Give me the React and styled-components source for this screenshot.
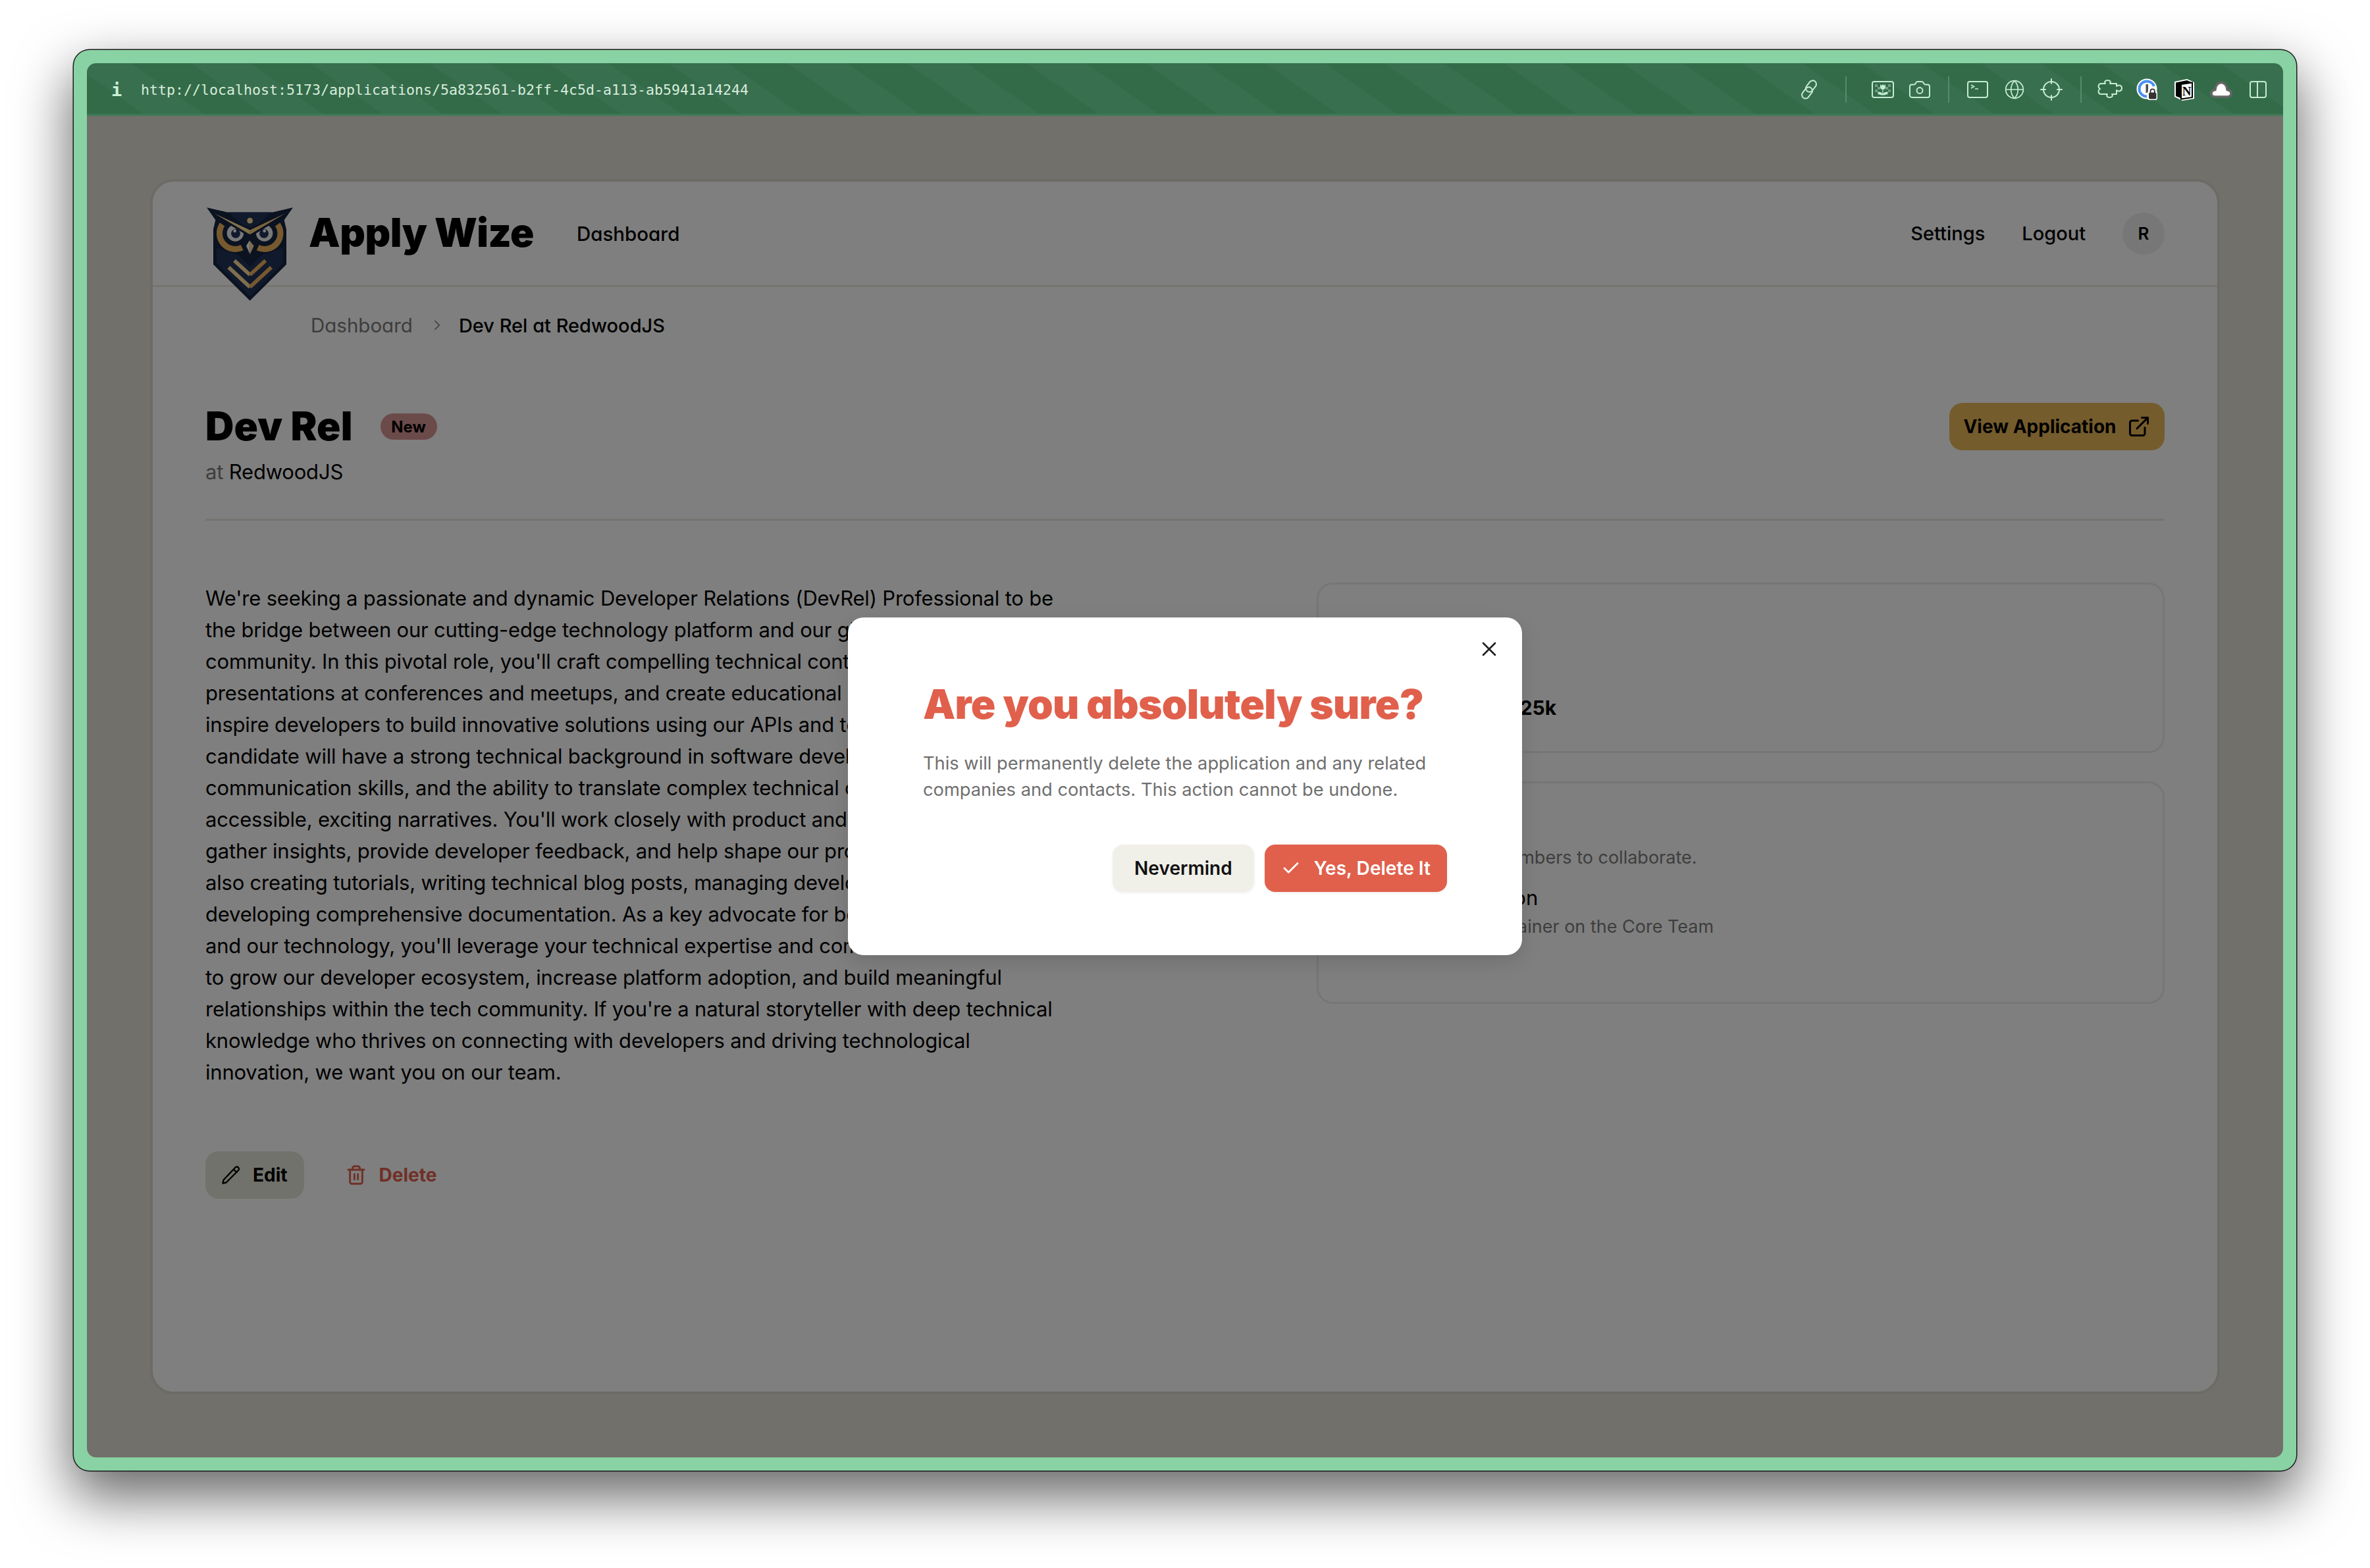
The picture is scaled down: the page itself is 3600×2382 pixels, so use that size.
import React from "react";
import styled, { createGlobalStyle } from "styled-components";
import { Camera, Check, ExternalLink, Globe, Trash2, X, ChevronRight } from "lucide-react";

const Global = createGlobalStyle`
  html, body { margin: 0; padding: 0; background: #fff; }
  body { font-family: Inter, "Liberation Sans", sans-serif; color: #000; }
  * { box-sizing: border-box; }
`;

const Stage = styled.div`
  width: 3600px;
  height: 2382px;
  padding: 76px 112px 148px;
  overflow: hidden;
`;
const Frame = styled.div`
  height: 100%;
  padding: 20px;
  background: #89d2a3;
  border-radius: 24px;
  box-shadow: 0 0 0 1.5px #1c1c1c, 0 36px 84px 4px rgba(0, 0, 0, 0.6);
`;
const Viewport = styled.div`
  height: 100%;
  display: flex;
  flex-direction: column;
  border-radius: 14px;
  overflow: hidden;
`;
const Toolbar = styled.div`
  height: 80px;
  flex: none;
  display: flex;
  align-items: center;
  padding: 0 10px 0 37px;
  box-shadow: inset 0 -3px 0 #3e7a55;
  background: repeating-linear-gradient(35deg, #336b48 0 52px, #386f4e 52px 104px);
`;
const InfoGlyph = styled.span`
  font: 700 27px "DejaVu Sans Mono", monospace;
  color: #c9f0d6;
  width: 45px;
`;
const Url = styled.span`
  font: 400 21.6px "DejaVu Sans Mono", monospace;
  color: #d7ebdd;
  flex: 1;
`;
const ToolIcon = styled.span`
  width: 56px;
  height: 56px;
  flex: none;
  display: flex;
  align-items: center;
  justify-content: center;
  color: #c5ecd3;
`;
const ToolSep = styled.span`
  width: 2px;
  height: 40px;
  flex: none;
  margin: 0 ${(p) => p.$gap}px;
  background: #548b6a;
`;
const Page = styled.div`
  position: relative;
  flex: 1;
  padding: 96px;
  background: #e2e0d4;
`;
const Card = styled.div`
  height: 100%;
  background: #fff;
  border: 4px solid #d8d6ca;
  border-radius: 36px;
  display: flex;
  flex-direction: column;
`;
const Header = styled.header`
  height: 160px;
  flex: none;
  display: flex;
  align-items: center;
  padding: 0 80px;
  border-bottom: 3px solid #ebe9e0;
`;
const Logo = styled.svg`
  width: 131px;
  height: 142px;
  margin: 62px 0 0 2px;
  flex: none;
`;
const Brand = styled.span`
  font-size: 60px;
  font-weight: 900;
  letter-spacing: -0.5px;
  margin: 0 0 3px 24px;
  font-feature-settings: "cv11";
`;
const NavLink = styled.span`
  font-size: ${(p) => p.$size || 29}px;
  font-weight: 500;
  font-feature-settings: "cv11";
  margin-left: ${(p) => p.$gap}px;
`;
const Spacer = styled.span`
  flex: 1;
`;
const Avatar = styled.span`
  width: 64px;
  height: 64px;
  margin-left: 56px;
  border-radius: 50%;
  background: #eeeeee;
  display: flex;
  align-items: center;
  justify-content: center;
  font-size: 26px;
  font-weight: 600;
`;
const Crumbs = styled.nav`
  display: flex;
  align-items: center;
  height: 40px;
  margin: 38px 0 0 240px;
  font-size: 29.5px;
  font-weight: 400;
  font-feature-settings: "cv11";
  color: #7a7a7a;
`;
const CrumbIcon = styled.span`
  display: flex;
  margin: 0 20px 0 24px;
`;
const CrumbCurrent = styled.span`
  color: #000;
  font-size: 29px;
  font-weight: 500;
`;
const Main = styled.main`
  padding: 0 80px;
  flex: 1;
`;
const TitleRow = styled.div`
  display: flex;
  align-items: center;
  margin-top: 98px;
  height: 72px;
`;
const Title = styled.h1`
  margin: 0 0 2px;
  font-size: 60px;
  font-weight: 900;
  letter-spacing: 0.2px;
`;
const Badge = styled.span`
  margin: 0 0 0 42px;
  width: 86px;
  height: 40px;
  border-radius: 20px;
  background: #d69694;
  display: flex;
  align-items: center;
  justify-content: center;
  font-size: 24px;
  font-weight: 700;
`;
const ViewButton = styled.span`
  margin-left: auto;
  width: 327px;
  height: 72px;
  border-radius: 20px;
  background: #eab858;
  display: flex;
  align-items: center;
  justify-content: center;
  gap: 16px;
  font-size: 28px;
  font-weight: 700;
`;
const Company = styled.p`
  margin: 13px 0 0;
  font-size: 31px;
  letter-spacing: -0.19px;
  line-height: 40px;
  color: #000;
`;
const CompanyAt = styled.span`
  color: #7c7c7c;
`;
const Rule = styled.hr`
  margin: 51px 0 0;
  border: 0;
  border-top: 3px solid #ebe9e0;
`;
const Columns = styled.div`
  display: grid;
  grid-template-columns: 1fr 1288px;
  padding-top: 94px;
`;
const Copy = styled.p`
  margin: 0;
  font-size: 31px;
  letter-spacing: -0.2px;
  line-height: 48px;
  white-space: pre-line;
`;
const Actions = styled.div`
  display: flex;
  align-items: center;
  gap: 42px;
  margin-top: 96px;
`;
const ActionButton = styled.span`
  height: 72px;
  padding: 0 ${(p) => (p.$danger ? "0" : "25px")};
  border-radius: 20px;
  display: flex;
  align-items: center;
  gap: 19px;
  font-size: 28px;
  font-weight: 700;
  background: ${(p) => (p.$danger ? "transparent" : "#e4e4d8")};
  color: ${(p) => (p.$danger ? "#e0604c" : "#000")};
  margin-left: ${(p) => (p.$danger ? "21px" : "0")};
`;
const Side = styled.aside`
  display: flex;
  flex-direction: column;
  gap: 43px;
`;
const Panel = styled.section`
  height: ${(p) => p.$h}px;
  border: 3px solid #ededed;
  border-radius: 24px;
  padding: 60px 0 0 ${(p) => p.$left}px;
`;
const PanelValue = styled.strong`
  font-size: 30px;
  font-weight: 700;
  display: block;
  margin-top: 75px;
`;
const PanelLabel = styled.span`
  font-size: 28px;
  color: #7c7c7c;
  display: block;
`;
const PanelHint = styled.p`
  margin: -1px 0 0 6px;
  font-size: 27px;
  line-height: 40px;
  color: #7c7c7c;
`;
const PersonName = styled.p`
  margin: 21px 0 0 167px;
  font-size: 31px;
  line-height: 40px;
`;
const PersonRole = styled.p`
  margin: 4px 0 0 167px;
  font-size: 27px;
  line-height: 40px;
  color: #7c7c7c;
`;
const Overlay = styled.div`
  position: absolute;
  inset: 0;
  background: rgba(0, 0, 0, 0.5);
  display: flex;
  align-items: center;
  justify-content: center;
`;
const Modal = styled.div`
  position: relative;
  width: 1024px;
  margin-bottom: 2px;
  padding: 96px 114px;
  background: #fff;
  border-radius: 24px;
  box-shadow: 0 10px 30px rgba(0, 0, 0, 0.12);
`;
const Close = styled.span`
  position: absolute;
  top: 30px;
  right: 32px;
  display: flex;
  color: #222;
`;
const ModalTitle = styled.h2`
  margin: 0;
  font-size: 62px;
  line-height: 72px;
  font-weight: 900;
  letter-spacing: -0.7px;
  color: #e0604c;
  font-feature-settings: "cv11";
`;
const ModalText = styled.p`
  margin: 34px 0 0;
  font-size: 27.25px;
  line-height: 40px;
  color: #6f6f6f;
  white-space: pre-line;
`;
const ModalActions = styled.div`
  display: flex;
  justify-content: flex-end;
  gap: 16px;
  margin-top: 63px;
`;
const ModalButton = styled.span`
  height: 72px;
  padding: 0 ${(p) => (p.$danger ? "25px" : "33px")};
  border-radius: 16px;
  display: flex;
  align-items: center;
  gap: 20px;
  font-size: 28px;
  letter-spacing: 0.05px;
  font-weight: 600;
  background: ${(p) => (p.$danger ? "#e0604c" : "#f0efe8")};
  color: ${(p) => (p.$danger ? "#fff" : "#111")};
  box-shadow: 0 2px 4px rgba(0, 0, 0, 0.06);
`;

const Owl = () => (
  <Logo viewBox="75 105 393 425">
    <polygon points="75,105 170,127 375,127 468,105 428,162 438,205 438,365 272,530 105,365 105,205 115,162" fill="#162440" />
    <polygon points="120,290 120,358 272,510 424,358 424,290 330,320 272,375 215,320" fill="#22345a" />
    <circle cx="205" cy="222" r="92" fill="#162440" />
    <circle cx="340" cy="222" r="92" fill="#162440" />
    <path d="M146 182A72 72 0 0 0 236 288" fill="none" stroke="#ecb25c" strokeWidth="27" />
    <path d="M398 182A72 72 0 0 1 308 288" fill="none" stroke="#ecb25c" strokeWidth="27" />
    <circle cx="205" cy="222" r="38" fill="#f2f2f2" />
    <circle cx="338" cy="222" r="38" fill="#f2f2f2" />
    <circle cx="207" cy="224" r="21" fill="#22345a" />
    <circle cx="336" cy="224" r="21" fill="#22345a" />
    <circle cx="203" cy="212" r="7" fill="#fff" />
    <circle cx="338" cy="212" r="7" fill="#fff" />
    <polygon points="175,127 370,127 272,215" fill="#22345a" />
    <polygon points="100,135 272,240 444,135 272,195" fill="#162440" />
    <polygon points="110,132 272,208 272,228" fill="#ffdf9a" />
    <polygon points="432,132 272,208 272,228" fill="#f5c878" />
    <polygon points="190,145 350,145 272,192" fill="#22345a" />
    <circle cx="272" cy="165" r="13" fill="#ffdf9a" />
    <polygon points="236,262 272,228 308,262 272,378" fill="#162440" />
    <polygon points="270,255 272,318 255,280" fill="#ffffff" />
    <polygon points="270,255 290,280 272,318" fill="#ffdf9a" />
    <polyline points="201,347 272,412" fill="none" stroke="#ffdf9a" strokeWidth="17" />
    <polyline points="272,412 343,347" fill="none" stroke="#ecb25c" strokeWidth="17" />
    <polyline points="175,378 272,468" fill="none" stroke="#ffdf9a" strokeWidth="17" />
    <polyline points="272,468 369,378" fill="none" stroke="#ecb25c" strokeWidth="17" />
  </Logo>
);

const stroke = { fill: "none", stroke: "currentColor", strokeWidth: 2, strokeLinecap: "round", strokeLinejoin: "round" };

const LinkIcon = () => (
  <svg width="32" height="32" viewBox="0 0 32 32" {...stroke}>
    <rect x="13.5" y="1.5" width="11" height="19" rx="5.5" transform="rotate(38 19 11)" />
    <rect x="7.5" y="11.5" width="11" height="19" rx="5.5" transform="rotate(38 13 21)" />
  </svg>
);
const FlowerIcon = () => (
  <svg width="34" height="26" viewBox="0 0 34 26">
    <rect x="1" y="1" width="32" height="24" rx="3" {...stroke} />
    <path d="M5 5h4v4H5zM9 9h4v4H9zM5 13h4v4H5zM9 17h4v4H9zM25 5h4v4h-4zM21 9h4v4h-4zM25 13h4v4h-4zM21 17h4v4h-4z" fill="currentColor" opacity=".4" />
    <path d="M13 5l2 2 2-2 2 2 2-2v4a4 4 0 0 1-8 0z" fill="currentColor" />
    <path d="M17 12v9M17 21c-2-4-5-4-7-4 1 3 4 4 7 4zM17 21c2-4 5-4 7-4-1 3-4 4-7 4z" fill="currentColor" stroke="currentColor" strokeWidth="1.2" />
  </svg>
);
const TerminalIcon = () => (
  <svg width="32" height="26" viewBox="0 0 32 26">
    <rect x="1" y="1" width="30" height="24" rx="3" {...stroke} />
    <path d="M6 6l4.500 2.500L6 11M12 12h5" fill="none" stroke="currentColor" strokeWidth="1.500" />
  </svg>
);
const CrossIcon = () => (
  <svg width="34" height="34" viewBox="0 0 34 34" {...stroke}>
    <circle cx="17" cy="17" r="12" />
    <path d="M17 1v7M17 26v7M1 17h7M26 17h7" />
  </svg>
);
const PuzzleIcon = () => (
  <svg width="40" height="30" viewBox="0 0 40 30" {...stroke}>
    <path d="M6 6h6c-2-3 0-5 3.500-5s5.500 2 3.500 5h10v4c3-2.500 8-2 8 3s-5 5.500-8 3v6h-7c2 3 0 5-3.500 5s-5.500-2-3.500-5H6c-3 0-4.500-2-4.500-4.500 0-1.500 1-2.500 2.500-3.500-1.500-1-2.500-2-2.500-3.500C1.500 8 3 6 6 6z" />
  </svg>
);
const OnePassIcon = () => (
  <svg width="34" height="34" viewBox="0 0 34 34">
    <circle cx="16" cy="16" r="15.500" fill="#fff" />
    <path d="M16 4.500A11.500 11.500 0 1 0 16 27.500" fill="none" stroke="#4a90f0" strokeWidth="4" />
    <path d="M16 4.500A11.500 11.500 0 0 1 27 12" fill="none" stroke="#4a90f0" strokeWidth="4" />
    <rect x="14.500" y="9" width="3.500" height="13" fill="#4d4d4d" />
    <rect x="17" y="19" width="15" height="14" rx="3" fill="#fff" />
    <rect x="19" y="21.500" width="11.500" height="10" rx="2" fill="#333" />
    <path d="M21.500 22v-2.500a3.200 3.200 0 0 1 6.400 0V22" fill="none" stroke="#333" strokeWidth="1.800" />
  </svg>
);
const NotionIcon = () => (
  <svg width="32" height="34" viewBox="0 0 32 34">
    <path d="M1 5L20 1l11 5v25l-18 3-12-6z" fill="#fff" />
    <path d="M3 6.500L20 3l8 3.500-15 2.500v22L3 27z" fill="#000" />
    <path d="M11 9l17-2.500V29l-17 2.500z" fill="#fff" stroke="#000" strokeWidth="2" />
    <text x="19.500" y="25.500" textAnchor="middle" fontFamily="Liberation Serif, serif" fontWeight="700" fontSize="19" fill="#000">N</text>
  </svg>
);
const CloudIcon = () => (
  <svg width="34" height="28" viewBox="0 0 34 28">
    <path d="M8 25c-4 0-6-2-6-5 0-3 2-5 6-5.500 0-6 4-11 9-11s9 5 9 11c4 .5 6 2.500 6 5.500s-2 5-6 5z" fill="#fff" stroke="#666" strokeWidth="3.500" strokeLinejoin="round" />
  </svg>
);
const SplitIcon = () => (
  <svg width="26" height="26" viewBox="0 0 26 26" {...stroke}>
    <rect x="1" y="1" width="24" height="24" rx="3" />
    <path d="M12 1v24" />
  </svg>
);
const PencilIcon = () => (
  <svg width="28" height="28" viewBox="0 0 28 28" fill="none" stroke="currentColor" strokeWidth="2.400" strokeLinejoin="round" strokeLinecap="round">
    <path d="M1.500 26.500l1-5L20.500 2.500c1-1 3-1.500 4.500 0s1 3.500 0 4.500L6.500 25.500z" />
    <path d="M18 5.500l4.500 4.500" />
  </svg>
);

const copy = `We're seeking a passionate and dynamic Developer Relations (DevRel) Professional to be
the bridge between our cutting-edge technology platform and our global developer
community. In this pivotal role, you'll craft compelling technical content, deliver
presentations at conferences and meetups, and create educational resources that
inspire developers to build innovative solutions using our APIs and tools. The ideal
candidate will have a strong technical background in software development, excellent
communication skills, and the ability to translate complex technical concepts into
accessible, exciting narratives. You'll work closely with product and engineering to
gather insights, provide developer feedback, and help shape our product roadmap, while
also creating tutorials, writing technical blog posts, managing developer forums, and
developing comprehensive documentation. As a key advocate for both our community
and our technology, you'll leverage your technical expertise and communication skills
to grow our developer ecosystem, increase platform adoption, and build meaningful
relationships within the tech community. If you're a natural storyteller with deep technical
knowledge who thrives on connecting with developers and driving technological
innovation, we want you on our team.`;

export default function App() {
  return (
    <>
      <Global />
      <Stage>
        <Frame>
          <Viewport>
            <Toolbar>
              <InfoGlyph>i</InfoGlyph>
              <Url>http://localhost:5173/applications/5a832561-b2ff-4c5d-a113-ab5941a14244</Url>
              <ToolIcon><LinkIcon /></ToolIcon>
              <ToolSep $gap={27} />
              <ToolIcon><FlowerIcon /></ToolIcon>
              <ToolIcon><Camera size={36} strokeWidth={1.300} /></ToolIcon>
              <ToolSep $gap={15} />
              <ToolIcon><TerminalIcon /></ToolIcon>
              <ToolIcon><Globe size={32} strokeWidth={1.300} /></ToolIcon>
              <ToolIcon><CrossIcon /></ToolIcon>
              <ToolSep $gap={16} />
              <ToolIcon><PuzzleIcon /></ToolIcon>
              <ToolIcon><OnePassIcon /></ToolIcon>
              <ToolIcon><NotionIcon /></ToolIcon>
              <ToolIcon><CloudIcon /></ToolIcon>
              <ToolIcon><SplitIcon /></ToolIcon>
            </Toolbar>
            <Page>
              <Card>
                <Header>
                  <Owl />
                  <Brand>Apply Wize</Brand>
                  <NavLink $gap={65} $size={29.5}>Dashboard</NavLink>
                  <Spacer />
                  <NavLink $gap={0}>Settings</NavLink>
                  <NavLink $gap={56}>Logout</NavLink>
                  <Avatar>R</Avatar>
                </Header>
                <Crumbs>
                  <span>Dashboard</span>
                  <CrumbIcon><ChevronRight size={26} strokeWidth={1.500} /></CrumbIcon>
                  <CrumbCurrent>Dev Rel at RedwoodJS</CrumbCurrent>
                </Crumbs>
                <Main>
                  <TitleRow>
                    <Title>Dev Rel</Title>
                    <Badge>New</Badge>
                    <ViewButton>View Application <ExternalLink size={36} strokeWidth={2} /></ViewButton>
                  </TitleRow>
                  <Company><CompanyAt>at</CompanyAt> RedwoodJS</Company>
                  <Rule />
                  <Columns>
                    <div>
                      <Copy>{copy}</Copy>
                      <Actions>
                        <ActionButton><PencilIcon /> Edit</ActionButton>
                        <ActionButton $danger><Trash2 size={32} strokeWidth={2.200} /> Delete</ActionButton>
                      </Actions>
                    </div>
                    <Side>
                      <Panel $h={259} $left={43}>
                        <PanelLabel>Compensation</PanelLabel>
                        <PanelValue>Salary: $100k – $125k</PanelValue>
                      </Panel>
                      <Panel $h={338} $left={64}>
                        <PanelLabel>Contacts</PanelLabel>
                        <PanelHint>Add your team members to collaborate.</PanelHint>
                        <PersonName>Nelson</PersonName>
                        <PersonRole>Maintainer on the Core Team</PersonRole>
                      </Panel>
                    </Side>
                  </Columns>
                </Main>
              </Card>
              <Overlay>
                <Modal>
                  <Close><X size={36} strokeWidth={1.800} /></Close>
                  <ModalTitle>Are you absolutely sure?</ModalTitle>
                  <ModalText>{"This will permanently delete the application and any related\ncompanies and contacts. This action cannot be undone."}</ModalText>
                  <ModalActions>
                    <ModalButton>Nevermind</ModalButton>
                    <ModalButton $danger><Check size={30} strokeWidth={2.200} /> Yes, Delete It</ModalButton>
                  </ModalActions>
                </Modal>
              </Overlay>
            </Page>
          </Viewport>
        </Frame>
      </Stage>
    </>
  );
}
